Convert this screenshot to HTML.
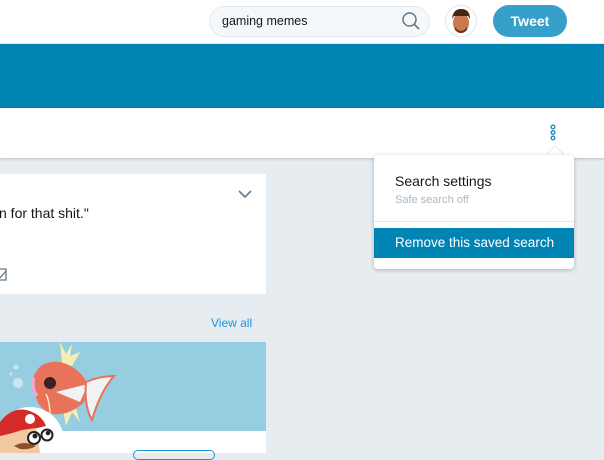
<!DOCTYPE html>
<html><head><meta charset="utf-8"><style>
*{box-sizing:border-box;margin:0;padding:0}
body{width:604px;height:453px;overflow:hidden;background:#e6ecf0;font-family:"Liberation Sans",sans-serif;position:relative}
.a{position:absolute}
</style></head><body>
<div class="a" style="left:0;top:0;width:604px;height:44px;background:#fff;border-bottom:1px solid #e1e8ed"></div>
<div class="a" style="left:209px;top:6px;width:221px;height:31px;border-radius:16px;background:#f5f8fa;border:1px solid #e1e8ed"></div>
<div class="a" style="left:222px;top:14px;font-size:12.5px;color:#14171a">gaming memes</div>
<svg class="a" style="left:401px;top:11px" width="20" height="20" viewBox="0 0 20 20"><circle cx="8.5" cy="8.5" r="6.5" fill="none" stroke="#657786" stroke-width="1.5"/><line x1="13.3" y1="13.3" x2="18" y2="18" stroke="#657786" stroke-width="1.7"/></svg>
<svg class="a" style="left:445px;top:5px" width="32" height="32" viewBox="0 0 32 32"><circle cx="16" cy="16" r="15.5" fill="#fff" stroke="#e1e8ed"/><ellipse cx="16" cy="18" rx="8" ry="10" fill="#c97a50"/><path d="M7 14 Q8 4 16 4 Q25 4 25 14 L23 11 L9 11Z" fill="#4a2412"/><path d="M10 22 Q16 30 22 22 L22 25 Q16 31 10 25Z" fill="#6b3418"/></svg>
<div class="a" style="left:493px;top:5px;width:74px;height:32px;border-radius:16px;background:#369fca;color:#fff;font-weight:bold;font-size:14px;text-align:center;line-height:32px">Tweet</div>
<div class="a" style="left:0;top:44px;width:604px;height:64px;background:#0084b4"></div>
<div class="a" style="left:0;top:108px;width:604px;height:50px;background:#fff;box-shadow:0 1px 3px rgba(0,0,0,.2)"></div>
<svg class="a" style="left:549px;top:124px" width="8" height="18" viewBox="0 0 8 18"><g fill="none" stroke="#1b8fbf" stroke-width="1.4"><circle cx="4" cy="3" r="1.8"/><circle cx="4" cy="8.5" r="1.8"/><circle cx="4" cy="14" r="1.8"/></g></svg>
<div class="a" style="left:0;top:174px;width:266px;height:120px;background:#fff"></div>
<div class="a" style="left:-1px;top:205px;font-size:14px;color:#14171a">n for that shit."</div>
<svg class="a" style="left:238px;top:190px" width="14" height="9" viewBox="0 0 14 9"><path d="M1 1 L7 7 L13 1" fill="none" stroke="#657786" stroke-width="1.6"/></svg>
<svg class="a" style="left:0;top:268px" width="8" height="13"><path d="M0 1 H6 V12 H0 M0 10 L6 3" fill="none" stroke="#657786" stroke-width="1.3"/></svg>
<div class="a" style="left:211px;top:316px;font-size:12px;color:#1b95e0">View all</div>
<div class="a" style="left:0;top:342px;width:266px;height:90px;background:#97cde1"></div>
<div class="a" style="left:0;top:431px;width:266px;height:22px;background:#fff"></div>
<div class="a" style="left:133px;top:450px;width:82px;height:10px;border:1px solid #1b95e0;border-radius:12px"></div>
<svg class="a" style="left:0;top:342px" width="120" height="111" viewBox="0 0 120 111">
<path d="M60 0 L66 12 L72 2 L70 14 L80 10 L72 24 L62 22Z" fill="#f5eeb0"/>
<path d="M62 62 L66 84 L72 70 L80 80 L74 60Z" fill="#f5eeb0"/>
<path d="M34 34 Q40 18 60 20 Q78 24 88 42 L84 60 Q70 74 52 72 Q40 68 36 56Z" fill="#e8735a"/>
<circle cx="50" cy="41" r="6" fill="#3a2222"/>
<path d="M34 36 Q31 46 37 54" fill="none" stroke="#f0a8d0" stroke-width="3"/>
<path d="M46 52 Q50 60 50 74" fill="none" stroke="#f5eeb0" stroke-width="1.5"/>
<path d="M56 50 L88 42 L80 60Z" fill="#f0f3f5"/>
<path d="M86 40 Q100 34 114 34 Q100 50 92 78 Q84 64 86 40Z" fill="#f0f3f5" stroke="#e8735a" stroke-width="2"/>
<circle cx="18" cy="41" r="5" fill="#c8e6f0"/><circle cx="16" cy="25" r="2.5" fill="#c8e6f0"/><circle cx="11" cy="32" r="1.6" fill="#c8e6f0"/>
<circle cx="30" cy="99" r="34" fill="#fff"/>
<path d="M0 80 Q14 62 32 70 Q42 74 46 84 L20 90 L0 96Z" fill="#d42a2a"/>
<circle cx="30" cy="77" r="5" fill="#fff"/>
<path d="M0 94 Q10 92 22 88 L36 86 L40 111 L0 111Z" fill="#f2c9a0"/>
<ellipse cx="34" cy="96" rx="6" ry="6" fill="#fff" stroke="#222" stroke-width="2"/><circle cx="35" cy="94" r="2.5" fill="#222"/>
<ellipse cx="47" cy="93" rx="5.5" ry="5.5" fill="#fff" stroke="#222" stroke-width="2"/><circle cx="48" cy="91" r="2.3" fill="#222"/>
<path d="M14 104 Q24 98 36 104 Q30 108 20 107Z" fill="#8a5030"/>
</svg>
<div class="a" style="left:548px;top:148px;width:14px;height:14px;background:#fff;transform:rotate(45deg);border-left:1px solid #e1e8ed;border-top:1px solid #e1e8ed"></div>
<div class="a" style="left:374px;top:155px;width:200px;height:114px;background:#fff;border-radius:4px;box-shadow:0 1px 4px rgba(0,0,0,.25)"></div>
<div class="a" style="left:395px;top:173px;font-size:14px;color:#14171a">Search settings</div>
<div class="a" style="left:395px;top:194px;font-size:11px;color:#aab8c2">Safe search off</div>
<div class="a" style="left:374px;top:221px;width:200px;height:1px;background:#e1e8ed"></div>
<div class="a" style="left:374px;top:228px;width:200px;height:30px;background:#0084b4;color:#fff;font-size:13.5px;line-height:30px;padding-left:21px">Remove this saved search</div>
</body></html>
